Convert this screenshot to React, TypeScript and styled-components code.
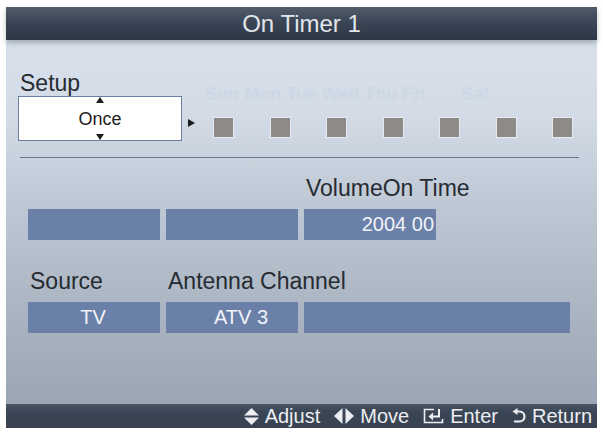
import styled, { createGlobalStyle } from 'styled-components';

const GlobalStyle = createGlobalStyle`
  html, body {
    margin: 0;
    padding: 0;
    background: #ffffff;
  }
  body {
    font-family: 'Liberation Sans', Arial, sans-serif;
  }
`;

const DAYS = ['Sun', 'Mon', 'Tue', 'Wed', 'Thu', 'Fri', 'Sat'];

function AdjustIcon() {
  return (
    <svg width="15" height="17" viewBox="0 0 15 17">
      <polygon points="0,7.5 7.5,0 15,7.5" fill="currentColor" />
      <polygon points="0,9.5 15,9.5 7.5,17" fill="currentColor" />
    </svg>
  );
}

function MoveIcon() {
  return (
    <svg width="20" height="16" viewBox="0 0 20 16">
      <polygon points="0,8 8.5,0 8.5,16" fill="currentColor" />
      <polygon points="11.5,0 20,8 11.5,16" fill="currentColor" />
    </svg>
  );
}

function EnterIcon() {
  return (
    <svg width="21" height="16" viewBox="0 0 21 16">
      <path
        d="M11 1.5 H1.5 V14.5 H19.5 V11"
        fill="none"
        stroke="currentColor"
        strokeWidth="1.6"
      />
      <path d="M16 1 V8.5 H9" fill="none" stroke="currentColor" strokeWidth="2" />
      <polygon points="10,4.5 5.5,8.5 10,12.5" fill="currentColor" />
    </svg>
  );
}

function ReturnIcon() {
  return (
    <svg width="14" height="16" viewBox="0 0 14 16">
      <path
        d="M4 3.5 H7.5 A5 5 0 0 1 7.5 13.5 H2"
        fill="none"
        stroke="currentColor"
        strokeWidth="2.2"
      />
      <polygon points="5.5,0 0.5,3.5 5.5,7" fill="currentColor" />
    </svg>
  );
}

export default function App() {
  return (
    <>
      <GlobalStyle />
      <Screen>
        <TitleBar>On Timer 1</TitleBar>
        <Body>
          <SetupRow>
            <SetupColumn>
              <Label>Setup</Label>
              <SpinBox>
                <Caret $dir="up" />
                <span>Once</span>
                <Caret $dir="down" />
              </SpinBox>
            </SetupColumn>
            <DaysColumn>
              <DayNames>
                <span>{DAYS.slice(0, 6).join(' ')}</span>
                <span>{DAYS[6]}</span>
              </DayNames>
              <DayBoxes>
                <Pointer />
                {DAYS.map((d) => (
                  <DayBox key={d} />
                ))}
              </DayBoxes>
            </DaysColumn>
          </SetupRow>

          <Divider />

          <FieldGrid>
            <Label $col={3}>VolumeOn Time</Label>
            <Field />
            <Field />
            <Field $align="right">2004 00</Field>
          </FieldGrid>

          <FieldGrid $spaced>
            <Label>Source</Label>
            <Label $col={2} $span={3}>
              Antenna Channel
            </Label>
            <Field>TV</Field>
            <Field $indent={20}>ATV 3</Field>
            <Field $span={2} />
          </FieldGrid>
        </Body>
        <Footer>
          <Hint>
            <AdjustIcon />
            Adjust
          </Hint>
          <Hint>
            <MoveIcon />
            Move
          </Hint>
          <Hint>
            <EnterIcon />
            Enter
          </Hint>
          <Hint>
            <ReturnIcon />
            Return
          </Hint>
        </Footer>
      </Screen>
    </>
  );
}

const Screen = styled.div`
  margin: 7px 0 0 6px;
  width: 591px;
  height: 421px;
  display: flex;
  flex-direction: column;
  background: linear-gradient(
    to bottom,
    #dae3ee 0%,
    #d2dbe6 25%,
    #bcc6d2 50%,
    #a9b3c0 75%,
    #97a2b0 100%
  );
`;

const TitleBar = styled.header`
  height: 33px;
  line-height: 33px;
  text-align: center;
  font-size: 24px;
  color: #e2e6eb;
  background: linear-gradient(to bottom, #525d6c 0%, #3a4555 45%, #2d3746 100%);
  box-shadow: 0 3px 5px rgba(40, 50, 65, 0.3);
  position: relative;
  z-index: 1;
`;

const Body = styled.main`
  flex: 1;
  padding-top: 31px;
`;

const SetupRow = styled.div`
  display: flex;
  align-items: flex-end;
  margin-left: 12px;
`;

const SetupColumn = styled.div`
  display: flex;
  flex-direction: column;
  gap: 1px;
`;

const Label = styled.div<{ $col?: number; $span?: number }>`
  font-size: 23px;
  line-height: 24px;
  color: #262b32;
  padding-left: 2px;
  white-space: nowrap;
  grid-row: 1;
  grid-column: ${(p) => (p.$col ? `${p.$col} / span ${p.$span ?? 1}` : 'auto')};
`;

const SpinBox = styled.div`
  width: 162px;
  height: 43px;
  background: #ffffff;
  border: 1px solid #6d7fa0;
  display: flex;
  flex-direction: column;
  align-items: center;
  justify-content: space-between;
  font-size: 18px;
  color: #1e1e1e;
  span {
    line-height: 20px;
  }
`;

const Caret = styled.div<{ $dir: 'up' | 'down' }>`
  width: 0;
  height: 0;
  border-left: 4px solid transparent;
  border-right: 4px solid transparent;
  ${(p) =>
    p.$dir === 'up'
      ? 'border-bottom: 6px solid #1e1e1e;'
      : 'border-top: 6px solid #1e1e1e;'}
`;

const DaysColumn = styled.div`
  display: flex;
  flex-direction: column;
  gap: 13px;
  margin-left: 6px;
  padding-bottom: 3px;
`;

const DayNames = styled.div`
  display: flex;
  gap: 36px;
  padding-left: 17px;
  font-size: 18px;
  line-height: 20px;
  font-weight: bold;
  color: #ced8e4;
`;

const DayBoxes = styled.div`
  display: flex;
  align-items: center;
  gap: 35.5px;
`;

const Pointer = styled.div`
  width: 0;
  height: 0;
  border-top: 4.5px solid transparent;
  border-bottom: 4.5px solid transparent;
  border-left: 7px solid #1b1b1b;
  margin-right: -17.5px;
  align-self: flex-start;
  margin-top: 2px;
`;

const DayBox = styled.div`
  width: 19px;
  height: 19px;
  background: #8e8a87;
  border: 1px solid #e6ebf0;
`;

const Divider = styled.hr`
  margin: 16px 18px 0 14px;
  border: 0;
  height: 1px;
  background: #6c7684;
`;

const FieldGrid = styled.div<{ $spaced?: boolean }>`
  display: grid;
  grid-template-columns: 132px 132px 132px 128px;
  column-gap: 6px;
  row-gap: 9px;
  margin: ${(p) => (p.$spaced ? '29px' : '18px')} 0 0 22px;
`;

const Field = styled.div<{ $align?: 'center' | 'right'; $span?: number; $indent?: number }>`
  grid-row: 2;
  grid-column: span ${(p) => p.$span ?? 1};
  height: 31px;
  line-height: 31px;
  background: #6b80a9;
  color: #f1f3f7;
  font-size: 20px;
  text-align: ${(p) => p.$align ?? 'center'};
  padding: 0 2px 0 ${(p) => p.$indent ?? 0}px;
`;

const Footer = styled.footer`
  height: 24px;
  display: flex;
  align-items: center;
  justify-content: flex-end;
  gap: 14px;
  padding-right: 5px;
  background: linear-gradient(to bottom, #4a5565 0%, #3b4656 30%, #38424f 100%);
  color: #eceef2;
  font-size: 20px;
`;

const Hint = styled.div`
  display: flex;
  align-items: center;
  gap: 6px;
  line-height: 24px;
`;
